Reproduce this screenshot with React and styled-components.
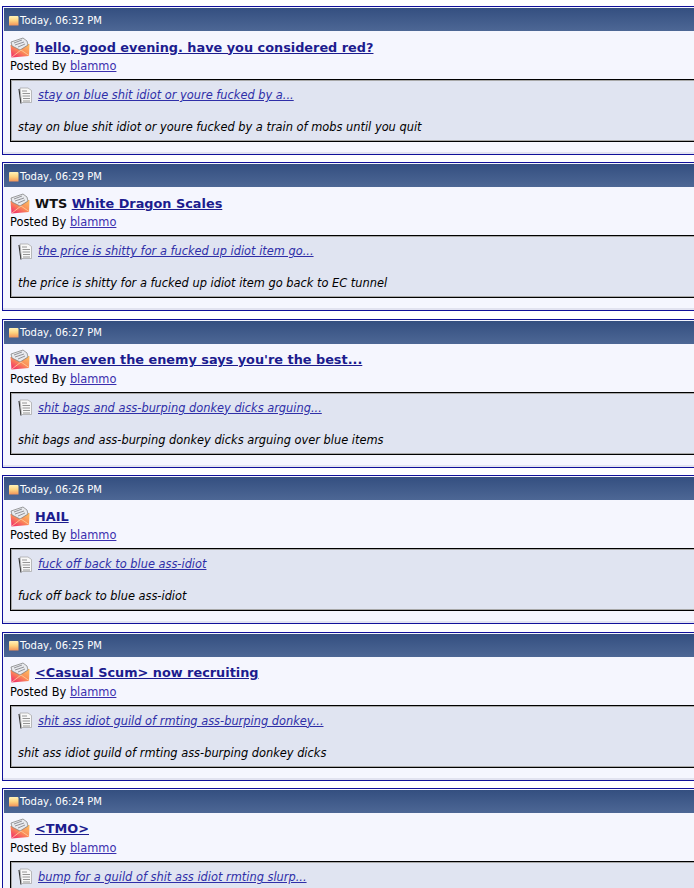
import React from "react";
import styled, { createGlobalStyle } from "styled-components";

const Global = createGlobalStyle`
  html, body { margin: 0; padding: 0; background: #fff; overflow: hidden; height: 888px; }
  body { font-family: "DejaVu Sans", Verdana, sans-serif; }
`;
const Page = styled.div`
  width: 694px;
  height: 888px;
  overflow: hidden;
  padding: 6px 0 0 2px;
  box-sizing: border-box;
  display: flex;
  flex-direction: column;
  gap: 7.4px;
`;
const Card = styled.article`
  flex: none;
  width: 800px;
  height: 149px;
  border: 1px solid #10109a;
  padding: 1px;
  background: #f5f6fe;
  box-shadow: inset 0 -2px #e2e3f0;
  box-sizing: border-box;
`;
const Header = styled.header`
  height: 23px;
  display: flex;
  align-items: center;
  padding: 1px 0 0 5px;
  box-sizing: border-box;
  gap: 2px;
  color: #fff;
  font-size: 10px;
  background: linear-gradient(#344f80, #4d6795);
`;
const HeaderText = styled.span`
  margin-left: -1px;
`;
const Body = styled.div`
  padding: 6px 0 0 6px;
`;
const TitleRow = styled.div`
  display: flex;
  align-items: center;
  gap: 5px;
  height: 20px;
  font-size: 12.85px;
  font-weight: 700;
  color: #111;
`;
const TitleLink = styled.a`
  color: #1c1c8e;
  text-decoration: underline;
`;
const Posted = styled.div`
  font-size: 11.4px;
  color: #000;
  margin-top: 2px;
  line-height: 15px;
`;
const NameLink = styled.a`
  color: #3a2fae;
  text-decoration: underline;
`;
const Quote = styled.div`
  margin-top: 5px;
  height: 63px;
  box-sizing: border-box;
  border: 1px solid #000;
  border-right: none;
  box-shadow: inset 1px 1px #a8a8a8, inset 0 -1px #a8a8a8;
  background: #e0e4f1;
  padding: 6px 0 0 7px;
  font-size: 11.4px;
  font-style: italic;
`;
const QuoteHead = styled.div`
  display: flex;
  align-items: center;
  gap: 5px;
  height: 18px;
`;
const QuoteLink = styled.a`
  color: #2f2fa8;
  text-decoration: underline;
`;
const QuoteText = styled.div`
  margin-top: 16px;
  line-height: 15px;
  color: #000;
`;

const Folder = () => (
  <svg width="10" height="11" viewBox="0 0 10 11">
    <defs>
      <linearGradient id="fold" x1="0" y1="0" x2="0" y2="1">
        <stop offset="0" stopColor="#fff2b8" />
        <stop offset="0.5" stopColor="#fdd27e" />
        <stop offset="1" stopColor="#f2935a" />
      </linearGradient>
    </defs>
    <path d="M0 2 Q0 1 1 1 H8.5 Q9.5 1 9.5 2 V10.5 H0 Z" fill="url(#fold)" />
  </svg>
);
const Envelope = () => (
  <svg width="20" height="21" viewBox="0 0 20 21">
    <defs>
      <linearGradient id="env" x1="1" y1="0" x2="0.2" y2="1">
        <stop offset="0" stopColor="#fdc060" />
        <stop offset="0.55" stopColor="#fa8a58" />
        <stop offset="1" stopColor="#f2306a" />
      </linearGradient>
    </defs>
    <path d="M0.5 8 L19.5 7 L19 19 L1.5 20.5 Z" fill="url(#env)" />
    <path d="M1 5 L13 1 L17 4 L18 8 L10 13 L2 9 Z" fill="#e8eaee" stroke="#777" strokeWidth="0.7" />
    <path d="M4 6 L12 3 M5 8 L14 5 M8 10 L15 7" stroke="#8a8a90" strokeWidth="0.9" />
    <path d="M2 20 L11 13 L19 18.5" fill="none" stroke="#ffd0a0" strokeWidth="0.8" />
  </svg>
);
const Doc = () => (
  <svg width="15" height="17" viewBox="0 0 15 17">
    <path d="M1 2 L3 16.5" stroke="#333" strokeWidth="1.2" />
    <path d="M2 1 H10 L13.5 3.5 V15.5 H3.5 Z" fill="#f8f8f8" stroke="#a0a0a0" strokeWidth="0.7" />
    <path d="M4 4 H9 M4.5 6.5 H12 M4.5 9 H12 M5 11.5 H12 M5 14 H12" stroke="#8a8a8a" strokeWidth="0.9" />
  </svg>
);

const posts = [
  { time: "06:32", title: "hello, good evening. have you considered red?", q: "stay on blue shit idiot or youre fucked by a...", t: "stay on blue shit idiot or youre fucked by a train of mobs until you quit" },
  { time: "06:29", prefix: "WTS", title: "White Dragon Scales", q: "the price is shitty for a fucked up idiot item go...", t: "the price is shitty for a fucked up idiot item go back to EC tunnel" },
  { time: "06:27", title: "When even the enemy says you're the best...", q: "shit bags and ass-burping donkey dicks arguing...", t: "shit bags and ass-burping donkey dicks arguing over blue items" },
  { time: "06:26", title: "HAIL", q: "fuck off back to blue ass-idiot", t: "fuck off back to blue ass-idiot" },
  { time: "06:25", title: "<Casual Scum> now recruiting", q: "shit ass idiot guild of rmting ass-burping donkey...", t: "shit ass idiot guild of rmting ass-burping donkey dicks" },
  { time: "06:24", title: "<TMO>", q: "bump for a guild of shit ass idiot rmting slurp...", t: "bump for a guild of shit ass idiot rmting slurp" },
];

export default function App() {
  return (
    <>
      <Global />
      <Page>
        {posts.map((p) => (
          <Card key={p.time}>
            <Header>
              <Folder />
              <HeaderText>Today, {p.time} PM</HeaderText>
            </Header>
            <Body>
              <TitleRow>
                <Envelope />
                <span>
                  {p.prefix ? `${p.prefix} ` : ""}
                  <TitleLink href="#">{p.title}</TitleLink>
                </span>
              </TitleRow>
              <Posted>
                Posted By <NameLink href="#">blammo</NameLink>
              </Posted>
              <Quote>
                <QuoteHead>
                  <Doc />
                  <QuoteLink href="#">{p.q}</QuoteLink>
                </QuoteHead>
                <QuoteText>{p.t}</QuoteText>
              </Quote>
            </Body>
          </Card>
        ))}
      </Page>
    </>
  );
}
